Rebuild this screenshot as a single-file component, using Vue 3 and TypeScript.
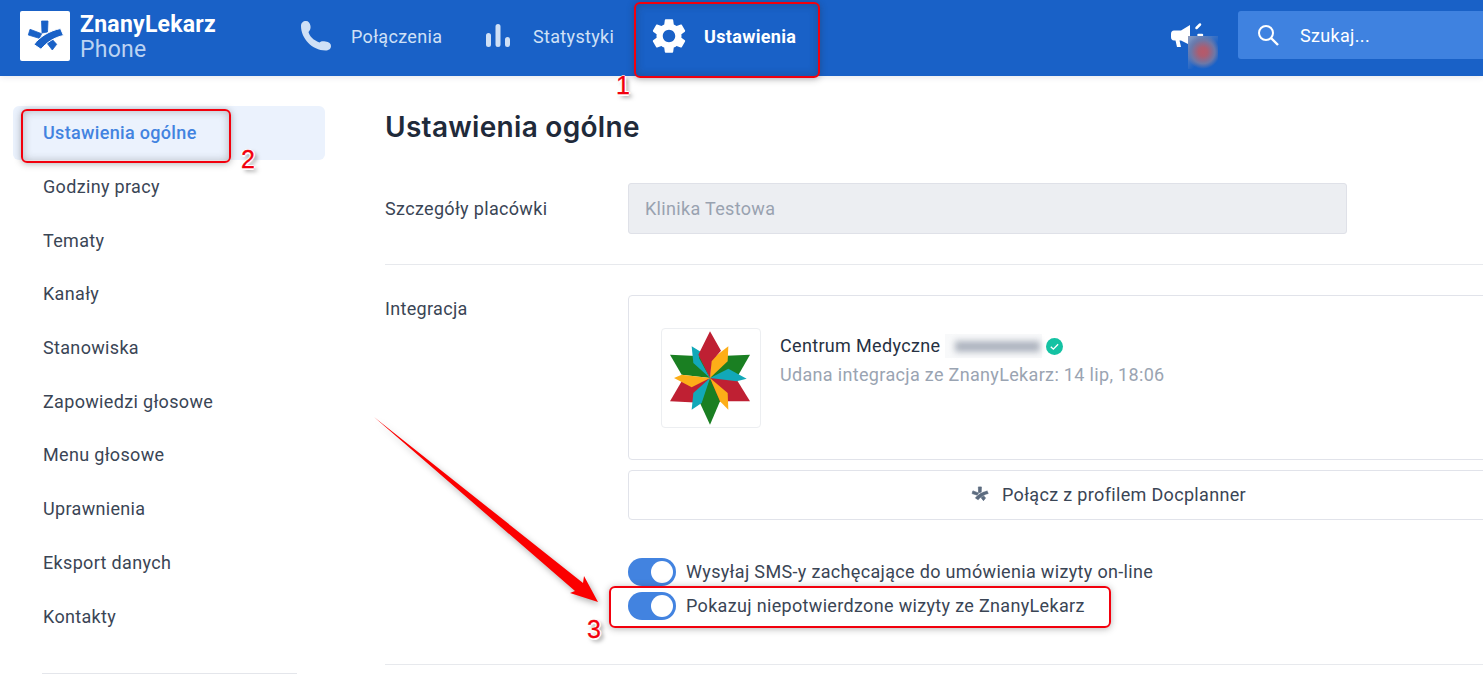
<script setup lang="ts">
const sideItems: string[] = ['Godziny pracy', 'Tematy', 'Kanały', 'Stanowiska', 'Zapowiedzi głosowe', 'Menu głosowe', 'Uprawnienia', 'Eksport danych', 'Kontakty']
const petals: { fill: string; points: string }[] = [
  { fill: '#1a7f22', points: '15,80 110,85 135,150 50,140' },
  { fill: '#1a7f22', points: '255,80 218,145 135,150 150,85' },
  { fill: '#bf2033', points: '255,220 150,220 135,150 212,150' },
  { fill: '#bf2033', points: '15,220 50,160 135,150 120,225' },
  { fill: '#1a7f22', points: '135,290 105,225 135,150 165,220' },
  { fill: '#12a8b8', points: '80,55 108,72 102,90 135,150 85,105' },
  { fill: '#12a8b8', points: '245,152 190,122 135,150 215,160' },
  { fill: '#12a8b8', points: '80,245 110,225 135,150 85,195' },
  { fill: '#fdae18', points: '190,55 188,100 135,150 138,95' },
  { fill: '#fdae18', points: '27,150 50,140 135,150 80,178' },
  { fill: '#fdae18', points: '190,245 165,220 135,150 188,195' },
  { fill: '#bf2033', points: '135,10 168,68 140,100 135,150 100,80' }
]
</script>

<template>
  <div class="page">
    <header class="top">
      <div class="brand">
        <span class="logo">
          <svg viewBox="0 0 50 50" width="50" height="50" class="mark">
            <path d="M21.500 10H28L27.500 21 22 22zM10 18.300 21.700 22.700 19.300 27.300 8.300 24zM26.700 31.700 30.700 26.700 36.700 33.300 32.300 39z" />
            <path class="swoosh" d="M40.500 17.500 43.500 24.500C34 26.500 26.500 31.500 21 38.300L14 33.500C20 25.500 29 20 40.500 17.500z" />
          </svg>
        </span>
        <span class="brand-text">
          <b>ZnanyLekarz</b>
          <span>Phone</span>
        </span>
      </div>
      <nav class="nav">
        <a class="nav-item calls">
          <svg viewBox="0 0 32 30" width="32" height="30"><path fill="#cfe0f6" d="M1 5C1 2 3 0 6 0 8.500 0 10 2 10.500 5 11 8 9.500 10 8.500 11 9.500 15 13 19 19.500 21.500 21 20 23 20 25.500 20.500 29 21 31 22.500 31 25 31 28 28.500 29.500 25.500 29.500 12 29.500 1 17 1 5z" /></svg>
          <span>Połączenia</span>
        </a>
        <a class="nav-item stats">
          <svg viewBox="0 0 24 24" width="24" height="24"><path stroke="#cfe0f6" stroke-width="5" stroke-linecap="round" d="M2.500 11.500v9M12 2.500v18M21.500 15.500v5" /></svg>
          <span>Statystyki</span>
        </a>
        <a class="nav-item active">
          <svg viewBox="2.4 2.2 19.2 19.6" width="34" height="34"><path fill="#fff" d="M19.14 12.94c.04-.3.06-.61.06-.94 0-.32-.02-.64-.07-.94l2.03-1.58c.18-.14.23-.41.12-.61l-1.92-3.32c-.12-.22-.37-.29-.59-.22l-2.39.96c-.5-.38-1.03-.7-1.62-.94l-.36-2.54c-.04-.24-.24-.41-.48-.41h-3.84c-.24 0-.43.17-.47.41l-.36 2.54c-.59.24-1.13.57-1.62.94l-2.39-.96c-.22-.08-.47 0-.59.22L2.74 8.87c-.12.21-.08.47.12.61l2.03 1.58c-.05.3-.09.63-.09.94s.02.64.07.94l-2.03 1.58c-.18.14-.23.41-.12.61l1.92 3.32c.12.22.37.29.59.22l2.39-.96c.5.38 1.03.7 1.62.94l.36 2.54c.05.24.24.41.48.41h3.84c.24 0 .44-.17.47-.41l.36-2.54c.59-.24 1.13-.56 1.62-.94l2.39.96c.22.08.47 0 .59-.22l1.92-3.32c.12-.22.07-.47-.12-.61l-2.01-1.58zM12 15.6c-1.98 0-3.6-1.62-3.6-3.6s1.62-3.6 3.6-3.6 3.6 1.62 3.6 3.6-1.62 3.6-3.6 3.6z" /></svg>
          <span>Ustawienia</span>
        </a>
      </nav>
      <div class="announce">
        <svg viewBox="0 0 34 28" width="34" height="28">
          <path fill="#fff" transform="translate(1 0)" d="M0 12c0-2 1-3.500 3-3.500h7L19 3v20l-9-4.500H8.500l1.500 6.500H6L4.500 18.500H3c-2 0-3-1.500-3-3.500z" />
          <path stroke="#fff" stroke-width="2.500" stroke-linecap="round" fill="none" d="M26.500 6l3.500-3.500M28.500 13h3.500" />
        </svg>
        <span class="blur-dot"></span>
      </div>
      <div class="search">
        <svg viewBox="0 0 24 24" width="24" height="24"><circle cx="10" cy="10" r="7" fill="none" stroke="#fff" stroke-width="2" /><path d="M15 15l7 7" stroke="#fff" stroke-width="2.400" /></svg>
        <span>Szukaj...</span>
      </div>
    </header>

    <div class="content">
      <aside class="side">
        <a class="side-item current">Ustawienia ogólne</a>
        <a v-for="item in sideItems" :key="item" class="side-item">{{ item }}</a>
        <div class="side-rule"></div>
      </aside>

      <main class="main">
        <h1>Ustawienia ogólne</h1>
        <section class="row first">
          <label>Szczegóły placówki</label>
          <div class="field short">Klinika Testowa</div>
        </section>
        <section class="row second">
          <label>Integracja</label>
          <div class="stack">
            <div class="card">
              <div class="clinic-logo">
                <svg viewBox="0 0 270 300" width="90" height="100">
                  <polygon v-for="(p, i) in petals" :key="i" :fill="p.fill" :points="p.points" />
                </svg>
              </div>
              <div class="clinic">
                <div class="clinic-name">
                  <span>Centrum Medyczne</span>
                  <span class="blur-name"><i></i></span>
                  <svg viewBox="0 0 16 16" width="17" height="17"><circle cx="8" cy="8" r="8" fill="#14c2a3" /><path d="M4.500 8.300l2.400 2.200 4.500-4.600" fill="none" stroke="#fff" stroke-width="1.300" /></svg>
                </div>
                <div class="clinic-sub">Udana integracja ze ZnanyLekarz: 14 lip, 18:06</div>
              </div>
            </div>
            <div class="connect">
              <svg viewBox="6 8 38 38" width="18" height="18" class="mark small">
                <path d="M21.500 10H28L27.500 21 22 22zM10 18.300 21.700 22.700 19.300 27.300 8.300 24zM26.700 31.700 30.700 26.700 36.700 33.300 32.300 39z" />
                <path class="swoosh" d="M40.500 17.500 43.500 24.500C34 26.500 26.500 31.500 21 38.300L14 33.500C20 25.500 29 20 40.500 17.500z" />
              </svg>
              <span>Połącz z profilem Docplanner</span>
            </div>
            <div class="toggles">
              <div class="toggle-line"><span class="toggle"><i></i></span><span class="toggle-text">Wysyłaj SMS-y zachęcające do umówienia wizyty on-line</span></div>
              <div class="toggle-line"><span class="toggle"><i></i></span><span class="toggle-text">Pokazuj niepotwierdzone wizyty ze ZnanyLekarz</span></div>
            </div>
          </div>
        </section>
      </main>
    </div>

    <div class="note box-a"></div>
    <div class="note box-b"></div>
    <div class="note box-c"></div>
    <span class="num n1">1</span>
    <span class="num n2">2</span>
    <span class="num n3">3</span>
    <svg class="arrow" viewBox="0 0 1483 680" width="1483" height="680">
      <polygon points="374,417 583,583 584,576 598,602 570,593 575,591" fill="#fb0000" />
    </svg>
  </div>
</template>

<style>
html, body { margin: 0; overflow: hidden; background: #fff; }
</style>

<style scoped>
.page { position: relative; width: 1483px; height: 680px; overflow: hidden; font-family: Roboto, "Liberation Sans", sans-serif; font-size: 18px; letter-spacing: .33px; color: #303b4b; background: #fff; }
.top { height: 76px; box-sizing: border-box; padding-bottom: 4px; background: #1961c7; display: flex; align-items: center; box-shadow: 0 1px 6px rgba(30,50,90,.12); position: relative; }
.brand { display: flex; align-items: center; margin-left: 20px; gap: 10px; width: 262px; flex: none; }
.logo { width: 50px; height: 50px; background: #fff; border-radius: 2px; display: block; }
.mark { display: block; }
.mark path { fill: #1961c7; stroke: #1961c7; stroke-width: .8; }
.mark .swoosh { stroke: #fff; stroke-width: 1; }
.mark.small path { fill: #5c6b7f; stroke: #5c6b7f; stroke-width: 1.500; }
.mark.small .swoosh { stroke: #fff; stroke-width: .6; }
.brand-text { display: flex; flex-direction: column; line-height: 25px; font-size: 23px; color: #bcd3f2; letter-spacing: .25px; margin-top: 2px; }
.brand-text b { color: #fff; font-weight: 700; }
.nav { display: flex; align-items: center; height: 72px; width: 888px; flex: none; margin-left: 18px; }
.nav-item { display: flex; align-items: center; color: #cfe0f6; font-weight: 400; }
.nav-item svg { display: block; flex: none; }
.calls { gap: 19px; width: 186px; }
.stats { gap: 23px; width: 166px; }
.active { color: #fff; font-weight: 700; gap: 18px; }
.announce { position: relative; width: 68px; flex: none; height: 28px; margin-left: -18px; }
.announce svg { display: block; }
.blur-dot { position: absolute; left: 18px; top: 14px; width: 30px; height: 33px; background: radial-gradient(circle at 50% 48%, #b7596a 0, #ac5d70 20%, #6c78a8 52%, rgba(25,97,199,0) 75%), linear-gradient(135deg, #8d9bbd, #1961c7 60%); }
.search { width: 260px; height: 48px; flex: none; background: #3f82e0; border-radius: 3px 0 0 3px; display: flex; align-items: center; padding-left: 18px; gap: 20px; color: #fff; margin-top: -2px; }
.search svg { display: block; }
.content { display: flex; }
.side { width: 312px; margin-left: 13px; padding-top: 30px; flex: none; }
.side-item { display: flex; align-items: center; height: 53.7px; padding-left: 30px; border-radius: 6px; box-sizing: border-box; color: #3a4555; }
.side-item.current { color: #4283e0; font-weight: 500; background: #ebf2fd; }
.side-rule { height: 1px; background: #e4e6eb; margin: 30px 28px 0 29px; }
.main { margin-left: 60px; width: 1200px; flex: none; }
h1 { font-family: Inter, Roboto, sans-serif; font-size: 28px; letter-spacing: .3px; line-height: 36px; font-weight: 600; color: #1f2a3a; margin: 33px 0 38px; }
.row { display: flex; border-bottom: 1px solid #e7e9ed; }
.row label { width: 243px; flex: none; color: #3a4555; }
.row.first { padding-bottom: 30px; }
.row.first label { line-height: 51px; }
.row.second { padding-top: 30px; padding-bottom: 44px; }
.row.second label { line-height: 28px; }
.field { height: 49px; line-height: 49px; border: 1px solid #dfe1e8; border-radius: 3px; background: #eceef2; color: #99a2b0; padding-left: 16px; }
.short { width: 701px; }
.stack { width: 960px; flex: none; }
.card { height: 163px; border: 1px solid #e1e3ea; border-radius: 4px; display: flex; align-items: center; padding-left: 32px; }
.clinic-logo { width: 98px; height: 98px; border: 1px solid #eceef1; border-radius: 4px; flex: none; }
.clinic-logo svg { display: block; margin: -1px 0 0 3px; }
.clinic { margin-left: 19px; margin-top: -34px; }
.clinic-name { display: flex; align-items: center; line-height: 28px; color: #263142; height: 28px; }
.clinic-name svg { margin-left: 4px; display: block; }
.blur-name { width: 97px; height: 24px; display: block; position: relative; margin-left: 5px; background: #f8f9fa; }
.blur-name i { position: absolute; left: 10px; right: 2px; top: 7px; height: 11px; background: #aeb4bf; filter: blur(3px); }
.clinic-sub { color: #9aa4b2; line-height: 29px; }
.connect { margin-top: 10px; height: 48px; border: 1px solid #e1e3ea; border-radius: 4px; display: flex; align-items: center; padding-left: 342px; gap: 13px; color: #3a4555; }
.connect span { margin-top: -2px; }
.toggles { margin-top: 38px; display: flex; flex-direction: column; gap: 6px; }
.toggle-line { display: flex; align-items: center; gap: 10px; height: 28px; color: #3a4555; }
.toggle-text { margin-top: -2px; }
.toggle { display: block; position: relative; width: 48px; height: 28px; border-radius: 14px; background: #4283e0; flex: none; }
.toggle i { position: absolute; right: 3px; top: 3px; width: 22px; height: 22px; border-radius: 50%; background: #fff; }
.note { position: absolute; box-sizing: border-box; border: 2px solid #f2000d; border-radius: 6px; box-shadow: 0 1px 7px rgba(40,40,40,.35), inset 0 0 8px rgba(40,40,40,.3); }
.box-a { left: 634px; top: 2px; width: 186px; height: 76px; }
.box-b { left: 21px; top: 109px; width: 210px; height: 54px; }
.box-c { left: 609px; top: 586px; width: 502px; height: 42px; box-shadow: 0 1px 7px rgba(40,40,40,.35); }
.num { position: absolute; font-family: "Liberation Sans", Arial, sans-serif; font-size: 25px; line-height: 28px; letter-spacing: 0; color: #f2000d; -webkit-text-stroke: .3px #f2000d; text-shadow: -1.500px 0 #fff, 1.500px 0 #fff, 0 -1.500px #fff, 0 1.500px #fff, 3px 3px 4px rgba(0,0,0,.5); }
.n1 { left: 616px; top: 71px; }
.n2 { left: 241px; top: 145px; }
.n3 { left: 587px; top: 615px; }
.arrow { position: absolute; left: 0; top: 0; filter: drop-shadow(2px 3px 3px rgba(0,0,0,.3)); pointer-events: none; }
</style>
